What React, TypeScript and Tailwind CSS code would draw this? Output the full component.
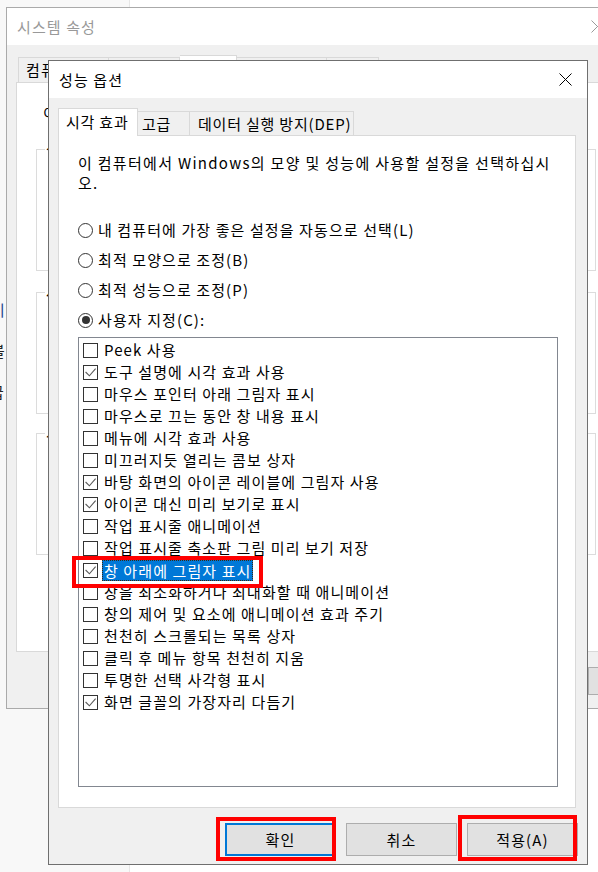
import React from 'react'

const font = "font-['Noto_Sans_CJK_KR',sans-serif]"

const items: [string, boolean][] = [
  ['Peek 사용', false],
  ['도구 설명에 시각 효과 사용', true],
  ['마우스 포인터 아래 그림자 표시', false],
  ['마우스로 끄는 동안 창 내용 표시', false],
  ['메뉴에 시각 효과 사용', false],
  ['미끄러지듯 열리는 콤보 상자', false],
  ['바탕 화면의 아이콘 레이블에 그림자 사용', true],
  ['아이콘 대신 미리 보기로 표시', true],
  ['작업 표시줄 애니메이션', false],
  ['작업 표시줄 축소판 그림 미리 보기 저장', false],
  ['창 아래에 그림자 표시', true],
  ['창을 최소화하거나 최대화할 때 애니메이션', false],
  ['창의 제어 및 요소에 애니메이션 효과 주기', false],
  ['천천히 스크롤되는 목록 상자', false],
  ['클릭 후 메뉴 항목 천천히 지움', false],
  ['투명한 선택 사각형 표시', false],
  ['화면 글꼴의 가장자리 다듬기', true],
]

const radios = [
  '내 컴퓨터에 가장 좋은 설정을 자동으로 선택(L)',
  '최적 모양으로 조정(B)',
  '최적 성능으로 조정(P)',
  '사용자 지정(C):',
]

function CheckBox({ checked }: { checked: boolean }) {
  return (
    <span className="w-[15px] h-[15px] border border-[#333333] bg-white flex items-center justify-center shrink-0">
      {checked && (
        <svg width="13" height="13" viewBox="0 0 13 13">
          <path d="M1.6 6 L5.4 9.8 L11.6 2.6" fill="none" stroke="#5a5a5a" strokeWidth="1.1" />
        </svg>
      )}
    </span>
  )
}

function Radio({ on }: { on: boolean }) {
  return (
    <span className="w-[15px] h-[15px] rounded-full border border-[#333333] bg-white flex items-center justify-center shrink-0">
      {on && <span className="w-[8px] h-[8px] rounded-full bg-[#333333]" />}
    </span>
  )
}

function GroupBox({ label, top }: { label: string; top: string }) {
  return (
    <div className={`relative ml-[19px] w-[560px] h-[122px] border border-[#dcdcdc] ${top}`}>
      <span className="absolute -top-[11px] left-[8px] bg-white px-[1px] leading-[20px] text-black whitespace-nowrap">{label}</span>
    </div>
  )
}

export default function App() {
  return (
    <div className={`relative w-[598px] h-[872px] overflow-hidden text-[15px] tracking-[1.1px] text-black ${font}`}>
      {/* desktop behind */}
      <div className="flex h-full">
        <div className="w-[130px] bg-[#f8f8f8] border-r border-[#e6e6e6]" />
        <div className="flex-1 bg-white" />
      </div>

      {/* stray text of a window further back */}
      <span className="absolute left-[-9px] top-[300px] leading-[20px] text-[#1e3f8f]">이</span>
      <span className="absolute left-[-9px] top-[341px] leading-[20px] text-[#222222]">블</span>
      <span className="absolute left-[-10px] top-[382px] leading-[20px] text-[#222222]">급</span>

      {/* 시스템 속성 (inactive, behind) */}
      <div className="absolute z-0 left-[6px] top-[7px] w-[660px] h-[702px] border border-[#aaaaaa] bg-[#f0f0f0] flex flex-col">
        <div className="relative h-[37px] bg-white flex items-center pl-[10px] shrink-0">
          <span className="text-[#999999] leading-[20px]">시스템 속성</span>
          <svg className="absolute left-[584px] top-[12px]" width="13" height="13" viewBox="0 0 13 13">
            <path d="M0.5 0.5 L12.5 12.5 M12.5 0.5 L0.5 12.5" stroke="#9a9a9a" strokeWidth="1" />
          </svg>
        </div>
        <div className="pt-[10px] pl-[11px] flex items-end h-[37px] shrink-0 relative z-10 whitespace-nowrap">
          <div className="w-[91px] h-[25px] border border-b-0 border-[#d9d9d9] bg-[#f0f0f0] pl-[7px] leading-[24px]">컴퓨터 이름</div>
          <div className="w-[71px] h-[25px] border border-l-0 border-b-0 border-[#d9d9d9] bg-[#f0f0f0] pl-[7px] leading-[24px]">하드웨어</div>
          <div className="w-[57px] h-[28px] -mb-px border border-l-0 border-b-0 border-[#d9d9d9] bg-white pl-[7px] leading-[26px]">고급</div>
          <div className="w-[90px] h-[25px] border border-l-0 border-b-0 border-[#d9d9d9] bg-[#f0f0f0] pl-[7px] leading-[24px]">시스템 보호</div>
          <div className="w-[52px] h-[25px] border border-l-0 border-b-0 border-[#d9d9d9] bg-[#f0f0f0] pl-[7px] leading-[24px]">원격</div>
        </div>
        <div className="ml-[9px] w-[630px] h-[570px] bg-white border border-[#d9d9d9] shrink-0">
          <div className="pl-[26px] pt-[20px] leading-[20px] whitespace-nowrap">이 내용을 대부분 변경하려면 관리자로 로그온해야 합니다.</div>
          <GroupBox label="성능" top="mt-[26px]" />
          <GroupBox label="사용자 프로필" top="mt-[21px]" />
          <GroupBox label="시작 및 복구" top="mt-[19px]" />
        </div>
        <div className="pl-[581px] pt-[15px] flex">
          <div className="w-[110px] h-[28px] border border-[#adadad] bg-[#e1e1e1]" />
        </div>
      </div>

      {/* 성능 옵션 dialog */}
      <div className="absolute z-10 left-[48px] top-[60px] w-[540px] h-[805px] border border-[#6f6f6f] bg-[#f0f0f0] flex flex-col">
        <div className="h-[37px] bg-white flex items-center justify-between pl-[10px] pr-[15px] shrink-0">
          <span className="leading-[20px]">성능 옵션</span>
          <svg width="13" height="13" viewBox="0 0 13 13">
            <path d="M0.5 0.5 L12.5 12.5 M12.5 0.5 L0.5 12.5" stroke="#000000" strokeWidth="1" />
          </svg>
        </div>

        <div className="pt-[10px] pl-[9px] flex items-end h-[37px] shrink-0 relative z-10 tracking-[0.8px] whitespace-nowrap">
          <div className="w-[80px] h-[28px] -mb-px border border-b-0 border-[#d9d9d9] bg-white pl-[7px] leading-[26px]">시각 효과</div>
          <div className="w-[52px] h-[24px] border border-l-0 border-b-0 border-[#d9d9d9] bg-[#f0f0f0] pl-[4px] leading-[23px]">고급</div>
          <div className="w-[164px] h-[24px] border border-l-0 border-b-0 border-[#d9d9d9] bg-[#f0f0f0] pl-[8px] leading-[23px]">데이터 실행 방지(DEP)</div>
        </div>

        <div className="ml-[9px] w-[518px] h-[673px] bg-white border border-[#d9d9d9] shrink-0 pl-[19px] pt-[17px]">
          <div className="leading-[20px] whitespace-nowrap tracking-[1.3px]">
            <div>이 컴퓨터에서 Windows의 모양 및 성능에 사용할 설정을 선택하십시</div>
            <div>오.</div>
          </div>
          <div className="mt-[22px] flex flex-col">
            {radios.map((r, i) => (
              <div key={r} className="h-[30px] flex items-center gap-[5px]">
                <Radio on={i === 3} />
                <span className="leading-[20px] whitespace-nowrap">{r}</span>
              </div>
            ))}
          </div>
          <div className="mt-[2px] w-[480px] h-[450px] border border-[#828790] bg-white pt-[1px] pl-[4px]">
            {items.map(([label, checked], i) => (
              <div key={label} className="h-[22px] flex items-center gap-[4px]">
                <CheckBox checked={checked} />
                {i === 10 ? (
                  <span className="h-[21px] px-[1px] bg-[#0078d7] text-white border border-dotted border-[#3a2a10] leading-[19px] whitespace-nowrap">
                    {label}
                  </span>
                ) : (
                  <span className="px-[2px] leading-[20px] whitespace-nowrap">{label}</span>
                )}
              </div>
            ))}
          </div>
        </div>

        <div className="mt-[15px] pr-[9px] flex justify-end gap-[10px]">
          <button className="w-[111px] h-[33px] border-2 border-[#0078d7] bg-[#e1e1e1] leading-[20px]">확인</button>
          <button className="w-[111px] h-[33px] border border-[#adadad] bg-[#e1e1e1] leading-[20px]">취소</button>
          <button className="w-[111px] h-[33px] border border-[#adadad] bg-[#e1e1e1] leading-[20px]">적용(A)</button>
        </div>
      </div>

      {/* red annotation boxes */}
      <div className="absolute z-20 left-[72px] top-[556px] w-[191px] h-[32px] border-4 border-[#ff0000]" />
      <div className="absolute z-20 left-[216px] top-[817px] w-[120px] h-[44px] border-4 border-[#ff0000]" />
      <div className="absolute z-20 left-[458px] top-[815px] w-[119px] h-[46px] border-4 border-[#ff0000]" />
    </div>
  )
}
